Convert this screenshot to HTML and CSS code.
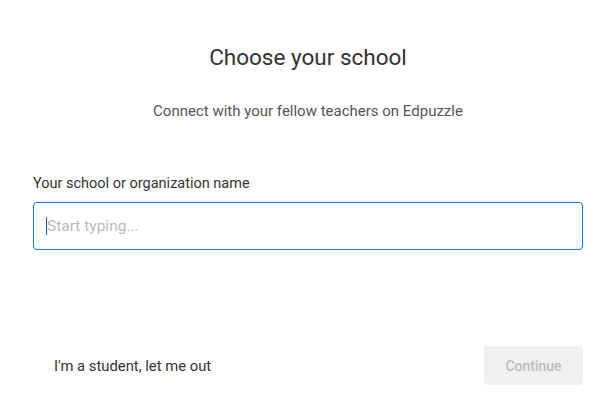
FILE: index.html
```html
<!DOCTYPE html>
<html>
<head>
<meta charset="utf-8">
<link rel="stylesheet" href="styles.css">
</head>
<body>
<div class="modal">
  <header class="head">
    <h1 class="title">Choose your school</h1>
    <p class="subtitle">Connect with your fellow teachers on Edpuzzle</p>
  </header>
  <div class="field">
    <label class="label">Your school or organization name</label>
    <div class="input"><span class="caret"></span><span class="placeholder">Start typing...</span></div>
  </div>
  <footer class="foot">
    <span class="link">I'm a student, let me out</span>
    <span class="btn">Continue</span>
  </footer>
</div>
</body>
</html>
```
FILE: styles.css
```css
html, body { margin: 0; background: #fff; }
body { font-family: Roboto, "Noto Sans", sans-serif; color: #333; }
.modal { width: 550px; padding: 0 29px 0 33px; height: 420px; display: flex; flex-direction: column; }
.head { text-align: center; padding-top: 41px; }
.title { margin: 0; font-size: 22.5px; font-weight: 400; line-height: 32px; color: #333; }
.subtitle { margin: 28px 0 0; font-size: 15px; line-height: 20px; color: #555; }
.field { margin-top: 54px; }
.label { display: block; font-size: 14.5px; line-height: 18px; color: #333; }
.input { margin-top: 9px; height: 46px; border: 1px solid #1a73e8; border-radius: 4px; display: flex; align-items: center; padding-left: 12px; }
.caret { width: 1px; height: 18px; background: #1a55c0; }
.placeholder { font-size: 15.5px; color: #b8bcc2; }
.foot { margin-top: auto; margin-bottom: 35px; display: flex; align-items: center; justify-content: space-between; padding-left: 21px; }
.link { font-size: 14.8px; color: #333; }
.btn { width: 99px; height: 39px; border-radius: 4px; background: #f0f0f0; color: #b8bcc2; font-size: 14px; font-weight: 500; display: flex; align-items: center; justify-content: center; }
```
